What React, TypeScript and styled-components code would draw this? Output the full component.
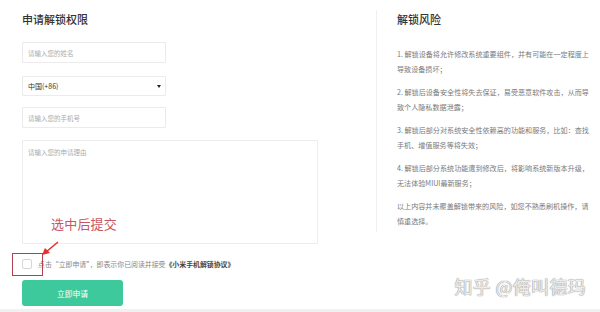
import React from "react";
import styled, { createGlobalStyle } from "styled-components";

const Global = createGlobalStyle`
  html, body { margin: 0; padding: 0; background: #fff; }
  body { font-family: "Noto Sans CJK SC", "Noto Sans", sans-serif; }
  * { box-sizing: border-box; }
`;

const Page = styled.div`
  width: 600px;
  height: 312px;
  display: flex;
  flex-direction: column;
  background: #fff;
  overflow: hidden;
`;

const Main = styled.div`
  position: relative;
  flex: 1;
  display: flex;
`;

const BottomBand = styled.div`
  height: 3px;
  background: #f1f1f1;
`;

const LeftCol = styled.div`
  position: relative;
  width: 376px;
  padding: 12px 0 0 22px;
  display: flex;
  flex-direction: column;
`;

const Title = styled.h2`
  margin: 0;
  font-size: 11px;
  line-height: 14px;
  font-weight: 500;
  color: #333;
`;

const Form = styled.div`
  display: flex;
  flex-direction: column;
  margin-top: 16px;
`;

const Field = styled.input<{ $gap?: number }>`
  width: 144px;
  height: 21px;
  margin: ${(p) => p.$gap ?? 0}px 0 0 0;
  padding: 0 0 0 5px;
  border: 1px solid #ebebeb;
  border-radius: 1px;
  outline: none;
  font-family: inherit;
  font-size: 6.5px;
  color: #333;
  &::placeholder { color: #ababab; }
`;

const SelectBox = styled.div`
  width: 144px;
  height: 20px;
  margin-top: 13px;
  padding: 0 4px 0 5px;
  border: 1px solid #ebebeb;
  border-radius: 1px;
  display: flex;
  align-items: center;
  justify-content: space-between;
  font-size: 7px;
  color: #333;
`;

const Caret = styled.span`
  width: 0;
  height: 0;
  border-left: 2px solid transparent;
  border-right: 2px solid transparent;
  border-top: 3px solid #222;
`;

const Area = styled.textarea`
  width: 296px;
  height: 104px;
  margin-top: 12px;
  padding: 7px 5px;
  border: 1px solid #ededed;
  border-radius: 1px;
  resize: none;
  outline: none;
  font-family: inherit;
  font-size: 6.5px;
  line-height: 8px;
  &::placeholder { color: #ababab; }
`;

const AgreeRow = styled.div`
  display: flex;
  align-items: center;
  gap: 6px;
  margin-top: 15px;
  height: 10px;
`;

const Check = styled.span`
  width: 10px;
  height: 10px;
  border: 1px solid #d6d6d6;
  border-radius: 2px;
  background: #fff;
`;

const AgreeText = styled.span`
  font-size: 6.9px;
  color: #888;
  white-space: nowrap;
  b { color: #444; font-weight: 600; }
`;

const SubmitBtn = styled.button`
  margin-top: 11px;
  width: 101px;
  height: 26px;
  border: none;
  border-radius: 3px;
  background: #3ec99d;
  color: #fff;
  font-family: inherit;
  font-size: 7.8px;
  padding: 0;
`;

const Annotation = styled.span`
  position: absolute;
  left: 51px;
  top: 215px;
  font-size: 13px;
  line-height: 18px;
  color: #c95561;
  letter-spacing: 0.2px;
`;

const RedFrame = styled.div`
  position: absolute;
  left: 12px;
  top: 253px;
  width: 31px;
  height: 23px;
  border: 1.5px solid #b3404f;
`;

const Arrow = styled.svg`
  position: absolute;
  left: 40px;
  top: 240px;
`;

const RightCol = styled.div`
  margin-top: 10px;
  height: 222px;
  border-left: 1px solid #f0f0f0;
  padding: 2px 0 0 20px;
`;

const RiskList = styled.div`
  margin-top: 21px;
  display: flex;
  flex-direction: column;
  gap: 9px;
`;

const Para = styled.p`
  margin: 0;
  font-size: 7.1px;
  line-height: 14.5px;
  color: #7a7a7a;
  span { display: block; white-space: nowrap; }
`;

const Watermark = styled.span`
  position: absolute;
  right: 14px;
  bottom: 13px;
  font-size: 18px;
  line-height: 20px;
  color: #ececec;
  text-shadow: 0 0 1px #8a8a8a, 0 0 1px #a0a0a0;
  letter-spacing: 0.3px;
`;

const risks: [string, string][] = [
  ["1. 解锁设备将允许修改系统重要组件，并有可能在一定程度上", "导致设备损坏；"],
  ["2. 解锁后设备安全性将失去保证，易受恶意软件攻击，从而导", "致个人隐私数据泄露；"],
  ["3. 解锁后部分对系统安全性依赖高的功能和服务，比如：查找", "手机、增值服务等将失效；"],
  ["4. 解锁后部分系统功能遭到修改后，将影响系统新版本升级，", "无法体验MIUI最新服务；"],
  ["以上内容并未覆盖解锁带来的风险，如您不熟悉刷机操作，请", "慎重选择。"],
];

export default function App() {
  return (
    <Page>
      <Global />
      <Main>
        <LeftCol>
          <Title>申请解锁权限</Title>
          <Form>
            <Field placeholder="请输入您的姓名" />
            <SelectBox>
              <span>中国(+86)</span>
              <Caret />
            </SelectBox>
            <Field $gap={11} placeholder="请输入您的手机号" />
            <Area placeholder="请输入您的申请理由" />
            <AgreeRow>
              <Check />
              <AgreeText>
                点击“立即申请”，即表示你已阅读并接受<b>《小米手机解锁协议》</b>
              </AgreeText>
            </AgreeRow>
            <SubmitBtn>立即申请</SubmitBtn>
          </Form>
          <Annotation>选中后提交</Annotation>
          <RedFrame />
          <Arrow width="22" height="16" viewBox="0 0 22 16">
            <line x1="18" y1="2" x2="6" y2="12" stroke="#e2312f" strokeWidth="1.6" />
            <polygon points="2,15 5,8 10,13" fill="#e2312f" />
          </Arrow>
        </LeftCol>
        <RightCol>
          <Title>解锁风险</Title>
          <RiskList>
            {risks.map(([a, b]) => (
              <Para key={a}>
                <span>{a}</span>
                <span>{b}</span>
              </Para>
            ))}
          </RiskList>
        </RightCol>
        <Watermark>知乎 @俺叫德玛</Watermark>
      </Main>
      <BottomBand />
    </Page>
  );
}
